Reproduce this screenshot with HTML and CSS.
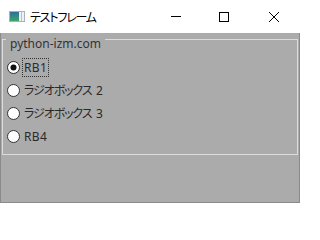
FILE: index.html
```html
<!DOCTYPE html>
<html lang="ja">
<head>
<meta charset="utf-8">
<title>テストフレーム</title>
<link rel="stylesheet" href="styles.css">
</head>
<body>
<div class="window">
  <div class="titlebar">
    <svg class="app-icon" width="16" height="11" viewBox="0 0 16 11">
      <defs>
        <linearGradient id="g" x1="0" y1="0" x2="0" y2="1">
          <stop offset="0" stop-color="#2f6f9f"/>
          <stop offset="1" stop-color="#3fa36a"/>
        </linearGradient>
      </defs>
      <rect x="0.5" y="0.5" width="15" height="10" fill="#eef2f6" stroke="#a9b0b8"/>
      <rect x="1" y="1" width="9" height="9" fill="url(#g)"/>
      <rect x="12" y="1" width="1" height="9" fill="#b8c0c8"/>
    </svg>
    <span class="title">テストフレーム</span>
    <div class="controls">
      <div class="btn btn-min">
        <svg width="10" height="10" viewBox="0 0 10 10"><rect x="0" y="4" width="10" height="1" fill="#000"/></svg>
      </div>
      <div class="btn btn-max">
        <svg width="10" height="10" viewBox="0 0 10 10"><rect x="0.5" y="0.5" width="9" height="9" fill="none" stroke="#000"/></svg>
      </div>
      <div class="btn btn-close">
        <svg width="10" height="10" viewBox="0 0 10 10"><path d="M0 0 L10 10 M10 0 L0 10" stroke="#000" stroke-width="1"/></svg>
      </div>
    </div>
  </div>
  <div class="client">
    <div class="group">
      <span class="group-label">python-izm.com</span>
      <div class="radio-list">
        <div class="radio checked">
          <svg class="dot" width="13" height="13" viewBox="0 0 13 13"><circle cx="6.5" cy="6.5" r="6" fill="#fff" stroke="#2a2a2a"/><circle cx="6.5" cy="6.5" r="3" fill="#111"/></svg>
          <span class="label latin focus">RB1</span>
        </div>
        <div class="radio">
          <svg class="dot" width="13" height="13" viewBox="0 0 13 13"><circle cx="6.5" cy="6.5" r="6" fill="#fff" stroke="#333"/></svg>
          <span class="label">ラジオボックス 2</span>
        </div>
        <div class="radio">
          <svg class="dot" width="13" height="13" viewBox="0 0 13 13"><circle cx="6.5" cy="6.5" r="6" fill="#fff" stroke="#333"/></svg>
          <span class="label">ラジオボックス 3</span>
        </div>
        <div class="radio">
          <svg class="dot" width="13" height="13" viewBox="0 0 13 13"><circle cx="6.5" cy="6.5" r="6" fill="#fff" stroke="#333"/></svg>
          <span class="label latin">RB4</span>
        </div>
      </div>
    </div>
  </div>
</div>
</body>
</html>
```

FILE: styles.css
```css
html, body {
  margin: 0;
  padding: 0;
}
body {
  font-family: "Noto Sans", "Noto Sans CJK JP", sans-serif;
  font-size: 12px;
  background: #ffffff;
}
.window {
  width: 300px;
  height: 203px;
  display: flex;
  flex-direction: column;
}
.titlebar {
  height: 33px;
  flex: 0 0 33px;
  background: #ffffff;
  display: flex;
  align-items: center;
}
.app-icon {
  margin-left: 9px;
}
.title {
  margin-left: 5px;
  font-family: "Noto Sans CJK JP", sans-serif;
  font-feature-settings: "palt";
  letter-spacing: -1.2px;
  font-size: 12px;
  color: #000;
  line-height: 16px;
}
.controls {
  margin-left: auto;
  display: flex;
  height: 33px;
}
.btn {
  display: flex;
  align-items: center;
  justify-content: center;
  height: 33px;
}
.btn-min { width: 48px; }
.btn-max { width: 48px; }
.btn-close { width: 52px; }
.client {
  flex: 1;
  background: #ababab;
  border: 1px solid #8a8a8a;
  border-top: none;
  padding: 6px 1px 0 1px;
}
.group {
  position: relative;
  height: 116px;
  box-sizing: border-box;
  border: 1px solid #dcdcdc;
  padding: 16px 0 0 4px;
}
.group-label {
  position: absolute;
  left: 3px;
  top: -4px;
  padding: 0 4px;
  background: #ababab;
  color: #333;
  line-height: 16px;
}
.radio-list {
  display: flex;
  flex-direction: column;
}
.radio {
  height: 23px;
  display: flex;
  align-items: center;
}
.dot {
  flex: 0 0 13px;
}
.label {
  margin-left: 2px;
  padding: 0 1px;
  color: #2a2a2a;
  line-height: 17px;
  font-family: "Noto Sans", "Noto Sans CJK JP", sans-serif;
  font-feature-settings: "palt";
  letter-spacing: -1.1px;
  word-spacing: 2.5px;
  border: 1px dotted transparent;
}
.label.latin {
  letter-spacing: 0.4px;
}
.label.focus {
  border-color: #333;
}
```
